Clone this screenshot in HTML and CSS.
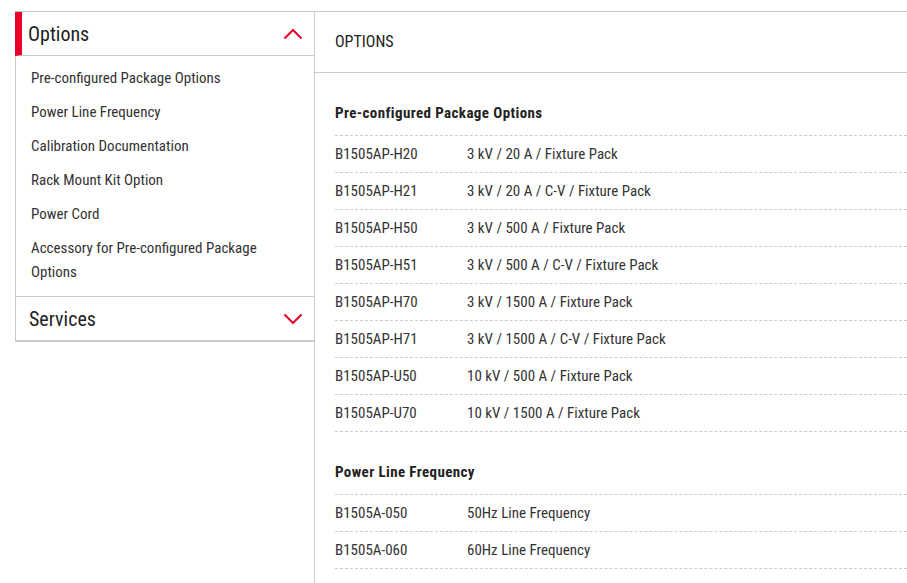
FILE: index.html
```html
<!DOCTYPE html>
<html lang="en">
<head>
    <meta charset="UTF-8">
    <meta name="viewport" content="width=device-width, initial-scale=1.0">
    <title>Options</title>
    <link rel="stylesheet" href="styles.css">
</head>
<body>

<div class="seite">
    <div class="seitenmenue">
        <div class="menue-kopf aktiv">
            <span>Options</span>
            <svg class="pfeil" width="20" height="12" viewBox="0 0 20 12"><path d="M1.5 10.5 L10 2 L18.5 10.5" fill="none" stroke="#e90029" stroke-width="2"/></svg>
        </div>
        <ul class="menue-liste">
            <li>Pre-configured Package Options</li>
            <li>Power Line Frequency</li>
            <li>Calibration Documentation</li>
            <li>Rack Mount Kit Option</li>
            <li>Power Cord</li>
            <li>Accessory for Pre-configured Package Options</li>
        </ul>
        <div class="menue-kopf">
            <span>Services</span>
            <svg class="pfeil" width="20" height="12" viewBox="0 0 20 12"><path d="M1.5 1.5 L10 10 L18.5 1.5" fill="none" stroke="#e90029" stroke-width="2"/></svg>
        </div>
    </div>

    <div class="inhalt">
        <div class="inhalt-kopf">OPTIONS</div>

        <div class="gruppe">
            <h3>Pre-configured Package Options</h3>
            <div class="zeile"><span class="nummer">B1505AP-H20</span><span>3 kV / 20 A / Fixture Pack</span></div>
            <div class="zeile"><span class="nummer">B1505AP-H21</span><span>3 kV / 20 A / C-V / Fixture Pack</span></div>
            <div class="zeile"><span class="nummer">B1505AP-H50</span><span>3 kV / 500 A / Fixture Pack</span></div>
            <div class="zeile"><span class="nummer">B1505AP-H51</span><span>3 kV / 500 A / C-V / Fixture Pack</span></div>
            <div class="zeile"><span class="nummer">B1505AP-H70</span><span>3 kV / 1500 A / Fixture Pack</span></div>
            <div class="zeile"><span class="nummer">B1505AP-H71</span><span>3 kV / 1500 A / C-V / Fixture Pack</span></div>
            <div class="zeile"><span class="nummer">B1505AP-U50</span><span>10 kV / 500 A / Fixture Pack</span></div>
            <div class="zeile"><span class="nummer">B1505AP-U70</span><span>10 kV / 1500 A / Fixture Pack</span></div>
        </div>

        <div class="gruppe">
            <h3>Power Line Frequency</h3>
            <div class="zeile"><span class="nummer">B1505A-050</span><span>50Hz Line Frequency</span></div>
            <div class="zeile"><span class="nummer">B1505A-060</span><span>60Hz Line Frequency</span></div>
        </div>
    </div>
</div>

</body>
</html>
```

FILE: styles.css
```css
body {
    margin: 0;
    font-family: "Roboto Condensed", "Liberation Sans Narrow", "Arial Narrow", sans-serif;
    color: #333;
    background: #fff;
}
.seite {
    display: flex;
    align-items: flex-start;
    padding: 11px 0 0 15px;
    height: 572px;
    overflow: hidden;
}
.seitenmenue {
    width: 298px;
    border: 1px solid #ccc;
    border-right: none;
    flex-shrink: 0;
}
.menue-kopf {
    display: flex;
    justify-content: space-between;
    align-items: center;
    height: 44px;
    box-sizing: border-box;
    padding: 0 11px 0 13px;
    font-size: 20px;
    color: #222;
    border-bottom: 1px solid #ccc;
}
.menue-kopf.aktiv {
    border-left: 7px solid #e90029;
    padding-left: 6px;
    margin-left: -1px;
}
.menue-liste {
    list-style: none;
    margin: 0;
    padding: 5px 40px 7px 15px;
    border-bottom: 1px solid #ccc;
}
.menue-liste li {
    font-size: 15px;
    line-height: 24px;
    padding: 5px 0;
}
.inhalt {
    flex: 1;
    border-left: 1px solid #ccc;
    border-top: 1px solid #ccc;
    height: 572px;
}
.inhalt-kopf {
    height: 60px;
    line-height: 60px;
    padding-left: 20px;
    font-size: 16px;
    color: #222;
    border-bottom: 1px solid #ccc;
}
.gruppe {
    padding: 30px 0 0 20px;
}
.gruppe h3 {
    margin: 0;
    font-size: 15px;
    letter-spacing: 0.4px;
    line-height: 20px;
    padding-bottom: 12px;
    color: #222;
    border-bottom: 1px dashed #ccc;
}
.zeile {
    display: flex;
    height: 36px;
    align-items: center;
    font-size: 15px;
    border-bottom: 1px dashed #ccc;
}
.nummer {
    width: 132px;
    flex-shrink: 0;
}
```
